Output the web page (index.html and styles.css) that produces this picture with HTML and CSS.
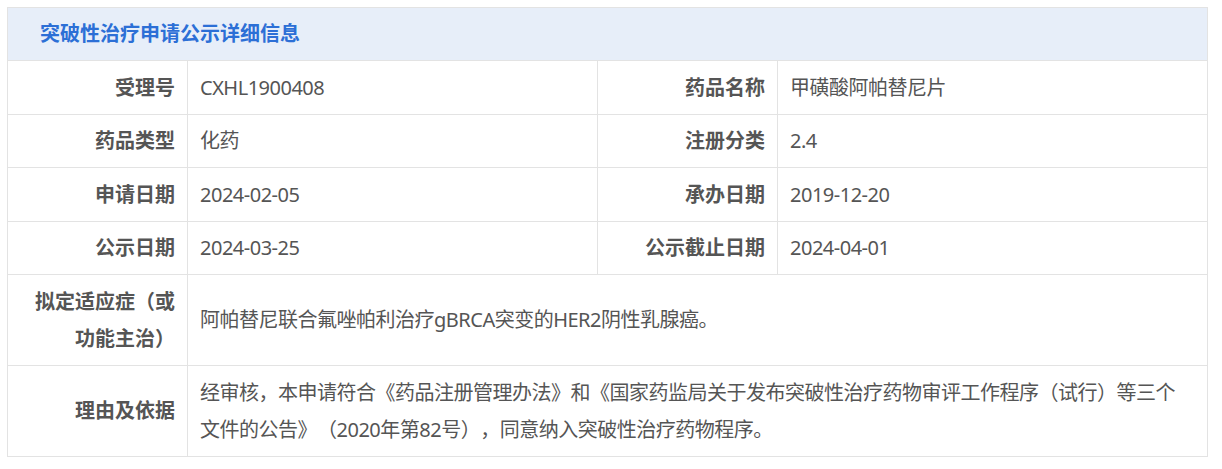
FILE: index.html
```html
<!DOCTYPE html>
<html lang="zh-CN">
<head>
<meta charset="utf-8">
<title>突破性治疗申请公示详细信息</title>
<link rel="stylesheet" href="styles.css">
</head>
<body>
<div class="panel">
  <table class="info">
    <colgroup>
      <col class="c-label">
      <col class="c-value">
      <col class="c-label">
      <col class="c-value2">
    </colgroup>
    <thead>
      <tr><th colspan="4" class="title">突破性治疗申请公示详细信息</th></tr>
    </thead>
    <tbody>
      <tr>
        <th class="label">受理号</th><td class="value">CXHL1900408</td>
        <th class="label">药品名称</th><td class="value">甲磺酸阿帕替尼片</td>
      </tr>
      <tr>
        <th class="label">药品类型</th><td class="value">化药</td>
        <th class="label">注册分类</th><td class="value">2.4</td>
      </tr>
      <tr>
        <th class="label">申请日期</th><td class="value">2024-02-05</td>
        <th class="label">承办日期</th><td class="value">2019-12-20</td>
      </tr>
      <tr>
        <th class="label">公示日期</th><td class="value">2024-03-25</td>
        <th class="label">公示截止日期</th><td class="value">2024-04-01</td>
      </tr>
      <tr>
        <th class="label">拟定适应症（或功能主治）</th>
        <td class="value" colspan="3">阿帕替尼联合氟唑帕利治疗gBRCA突变的HER2阴性乳腺癌。</td>
      </tr>
      <tr>
        <th class="label">理由及依据</th>
        <td class="value" colspan="3">经审核，本申请符合《药品注册管理办法》和《国家药监局关于发布突破性治疗药物审评工作程序（试行）等三个文件的公告》（2020年第82号），同意纳入突破性治疗药物程序。</td>
      </tr>
    </tbody>
  </table>
</div>
</body>
</html>
```

FILE: styles.css
```css
html, body {
  margin: 0;
  padding: 0;
  background: #ffffff;
}

body {
  padding: 7px;
  font-family: "Noto Sans", "Noto Sans CJK SC", sans-serif;
  font-size: 20px;
  color: #555555;
  text-spacing-trim: space-all;
}

.panel {
  width: 1200px;
}

.info {
  width: 1200px;
  border-collapse: collapse;
  table-layout: fixed;
}

.c-label { width: 180px; }
.c-value { width: 410px; }
.c-value2 { width: 430px; }

.info th,
.info td {
  border: 1px solid #e3e3e3;
  line-height: 37.5px;
  vertical-align: middle;
}

.title {
  height: 52px;
  padding: 0 0 0 32px;
  background: #e7eef9;
  color: #2c6fd6;
  font-weight: 700;
  font-size: 20px;
  text-align: left;
}

.label {
  height: 53.5px;
  box-sizing: border-box;
  padding: 7.5px 12px 7.5px 12px;
  text-align: right;
  font-weight: 700;
  color: #555555;
}

.value {
  padding: 7.5px 24px 7.5px 12px;
  text-align: left;
  font-weight: 400;
  letter-spacing: -0.5px;
  color: #555555;
}
```
